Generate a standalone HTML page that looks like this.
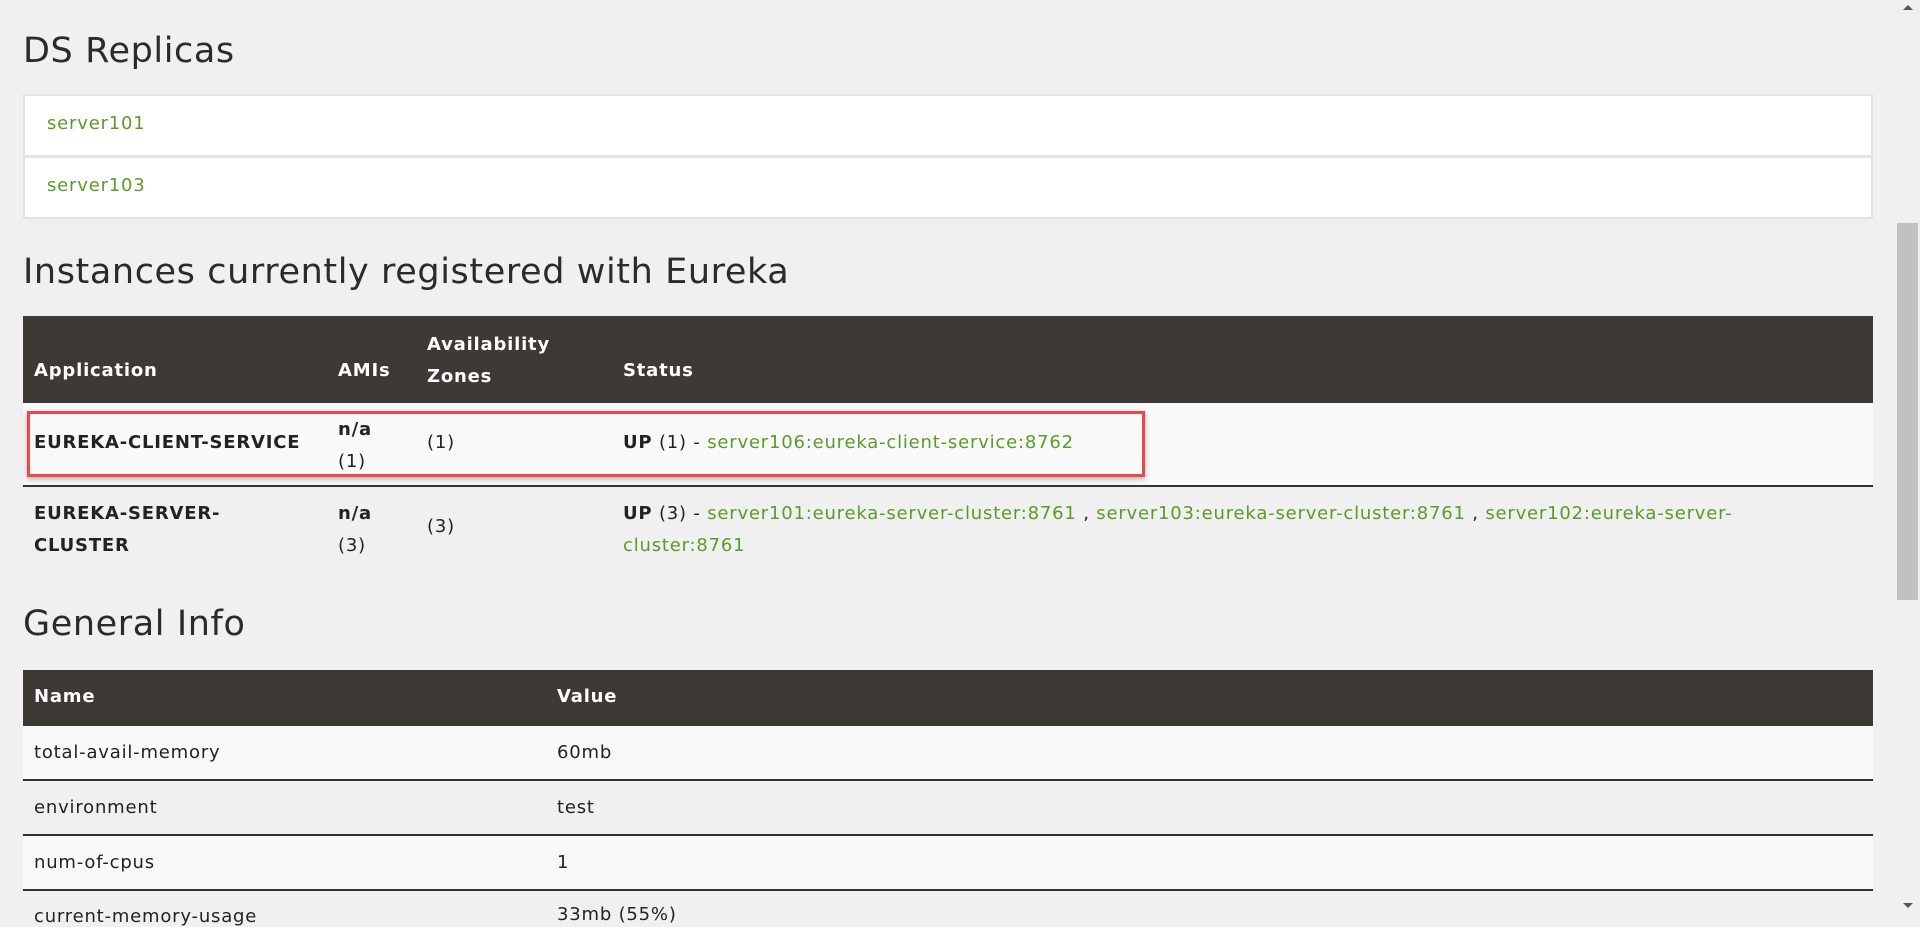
<!DOCTYPE html>
<html><head><meta charset="utf-8"><style>
*{margin:0;padding:0;box-sizing:border-box}
body{width:1920px;height:914px;overflow:hidden;background:#f0f0f0;font-family:"DejaVu Sans","Liberation Sans",sans-serif;color:#222;font-size:18px;letter-spacing:0.8px;position:relative}
.a{position:absolute;white-space:nowrap}
h2{position:absolute;left:23px;font-weight:normal;font-size:35px;letter-spacing:0.6px;color:#2b2b2b;line-height:40px}
.g{color:#5a9b2a}
.box{position:absolute;left:23px;width:1850px;background:#fff;border:2px solid #e2e2e2}
.hd{position:absolute;left:23px;width:1850px;background:#3d3935}
.w{color:#fff;font-weight:bold}
.b{font-weight:bold}
.row{position:absolute;left:23px;width:1850px}
</style></head><body>
<h2 style="top:31px">DS Replicas</h2>
<div class="box" style="top:94px;height:63px"></div>
<div class="box" style="top:156px;height:63px"></div>
<div class="a g" style="left:47px;top:113px">server101</div>
<div class="a g" style="left:47px;top:175px">server103</div>

<h2 style="top:252px">Instances currently registered with Eureka</h2>
<div class="hd" style="top:316px;height:87px"></div>
<div class="a w" style="left:34px;top:360px">Application</div>
<div class="a w" style="left:338px;top:360px">AMIs</div>
<div class="a w" style="left:427px;top:329px;line-height:32px">Availability<br>Zones</div>
<div class="a w" style="left:623px;top:360px">Status</div>

<div class="row" style="top:403px;height:84px;background:#f9f9f9;border-bottom:2px solid #333"></div>
<div class="a" style="left:27px;top:411px;width:1118px;height:66px;border:3px solid #ec474a;box-shadow:0 2px 5px rgba(0,0,0,.3)"></div>
<div class="a b" style="left:34px;top:432px">EUREKA-CLIENT-SERVICE</div>
<div class="a" style="left:338px;top:414px;line-height:32px"><b>n/a</b><br>(1)</div>
<div class="a" style="left:427px;top:432px">(1)</div>
<div class="a" style="left:623px;top:432px"><b>UP</b> (1) - <span class="g">server106:eureka-client-service:8762</span></div>

<div class="a b" style="left:34px;top:498px;line-height:32px">EUREKA-SERVER-<br>CLUSTER</div>
<div class="a" style="left:338px;top:498px;line-height:32px"><b>n/a</b><br>(3)</div>
<div class="a" style="left:427px;top:516px">(3)</div>
<div class="a" style="left:623px;top:498px;line-height:32px"><b>UP</b> (3) - <span class="g">server101:eureka-server-cluster:8761</span> , <span class="g">server103:eureka-server-cluster:8761</span> , <span class="g">server102:eureka-server-</span><br><span class="g">cluster:8761</span></div>

<h2 style="top:604px">General Info</h2>
<div class="hd" style="top:670px;height:56px"></div>
<div class="a w" style="left:34px;top:686px">Name</div>
<div class="a w" style="left:557px;top:686px">Value</div>
<div class="row" style="top:726px;height:55px;background:#f9f9f9;border-bottom:2px solid #333"></div>
<div class="row" style="top:781px;height:55px;border-bottom:2px solid #333"></div>
<div class="row" style="top:836px;height:55px;background:#f9f9f9;border-bottom:2px solid #333"></div>
<div class="a" style="left:34px;top:742px">total-avail-memory</div><div class="a" style="left:557px;top:742px">60mb</div>
<div class="a" style="left:34px;top:797px">environment</div><div class="a" style="left:557px;top:797px">test</div>
<div class="a" style="left:34px;top:852px">num-of-cpus</div><div class="a" style="left:557px;top:852px">1</div>
<div class="a" style="left:34px;top:906px">current-memory-usage</div><div class="a" style="left:557px;top:904px">33mb (55%)</div>

<div class="a" style="left:1894px;top:0;width:26px;height:914px;background:#f0f0f0"></div>
<div class="a" style="left:1897px;top:223px;width:21px;height:377px;background:#c1c1c1"></div>
<div class="a" style="left:1903px;top:5px;width:0;height:0;border-left:5px solid transparent;border-right:5px solid transparent;border-bottom:5px solid #555"></div>
<div class="a" style="left:1903px;top:903px;width:0;height:0;border-left:5px solid transparent;border-right:5px solid transparent;border-top:5px solid #555"></div>
</body></html>
